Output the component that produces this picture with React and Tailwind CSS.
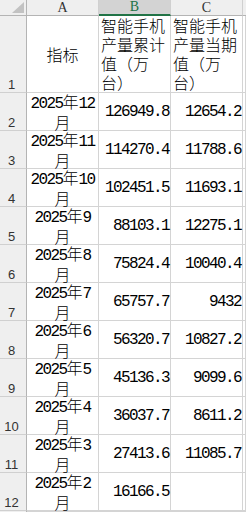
import React from 'react';

const rows = [
  ['2025年12', '126949.8', '12654.2'],
  ['2025年11', '114270.4', '11788.6'],
  ['2025年10', '102451.5', '11693.1'],
  ['2025年9', '88103.1', '12275.1'],
  ['2025年8', '75824.4', '10040.4'],
  ['2025年7', '65757.7', '9432'],
  ['2025年6', '56320.7', '10827.2'],
  ['2025年5', '45136.3', '9099.6'],
  ['2025年4', '36037.7', '8611.2'],
  ['2025年3', '27413.6', '11085.7'],
  ['2025年2', '16166.5', ''],
];

// SimSun-ish look: half-width digits in mono, CJK in Noto
function T({ s }) {
  const parts = s.match(/[\x00-\x7f]+|[^\x00-\x7f]+/g) || [];
  return parts.map((p, i) =>
    /[\x00-\x7f]/.test(p) ? (
      <span key={i} className="font-['Liberation_Mono',monospace] tracking-[-1.6px]">{p}</span>
    ) : (
      <span key={i}>{p}</span>
    )
  );
}

const cell = 'border-r border-b border-[#d4d4d4] bg-white';
const rowHead = 'border-r border-b border-r-[#b4b4b4] border-b-[#d0d0d0] bg-[#efefef] flex items-end justify-center pr-[3px] text-[13px] leading-[15px] text-[#333] font-["Liberation_Sans",sans-serif]';
const colHead = 'border-r border-b border-r-[#d0d0d0] border-b-[#b4b4b4] bg-[#efefef] flex items-center justify-center text-[14px] leading-none text-[#333] font-["Liberation_Serif",serif]';

export default function App() {
  return (
    <div className="w-[246px] h-[512px] overflow-hidden bg-white text-black text-[16px] font-['Noto_Sans_CJK_SC',sans-serif] font-light">
      <div className="grid grid-cols-[27px_72px_72px_72px_1fr] grid-rows-[16px_77px_repeat(11,38px)_1fr]">
        {/* corner */}
        <div className="border-r border-b border-[#b4b4b4] bg-[#efefef] flex items-end justify-end pr-[2px] pb-[2px]">
          <svg width="12" height="11" viewBox="0 0 12 11">
            <polygon points="12,0 12,11 0,11" fill="#c2c2c2" />
          </svg>
        </div>
        <div className={colHead}>A</div>
        <div className="border-r border-b-2 border-r-[#d0d0d0] border-b-[#217346] bg-[#d3d3d3] flex items-center justify-center text-[14px] leading-none text-[#217346] font-['Liberation_Serif',serif]">B</div>
        <div className={colHead}>C</div>
        <div className="border-b border-[#b4b4b4] bg-[#efefef]" />

        {/* row 1 */}
        <div className={rowHead}>1</div>
        <div className={cell + ' flex items-center justify-center leading-[19px]'}>指标</div>
        <div className={cell + ' flex flex-col justify-center pl-[2px] leading-[19px] whitespace-nowrap'}>
          <div>智能手机</div>
          <div>产量累计</div>
          <div>值（万</div>
          <div>台）</div>
        </div>
        <div className={cell + ' flex flex-col justify-center pl-[2px] leading-[19px] whitespace-nowrap'}>
          <div>智能手机</div>
          <div>产量当期</div>
          <div>值（万</div>
          <div>台）</div>
        </div>
        <div className={cell} />

        {rows.map((r, i) => (
          <React.Fragment key={i}>
            <div className={rowHead}>{i + 2}</div>
            <div className={cell + ' flex flex-col items-center justify-center leading-[18px] whitespace-nowrap'}>
              <div><T s={r[0]} /></div>
              <div>月</div>
            </div>
            <div className={cell + ' flex items-center justify-end pr-[1px] whitespace-nowrap'}>
              <T s={r[1]} />
            </div>
            <div className={cell + ' flex items-center justify-end pr-[1px] whitespace-nowrap'}>
              <T s={r[2]} />
            </div>
            <div className={cell} />
          </React.Fragment>
        ))}

        <div className="border-r border-r-[#b4b4b4] bg-[#efefef]" />
        <div className={cell} />
        <div className={cell} />
        <div className={cell} />
        <div className={cell} />
      </div>
    </div>
  );
}
